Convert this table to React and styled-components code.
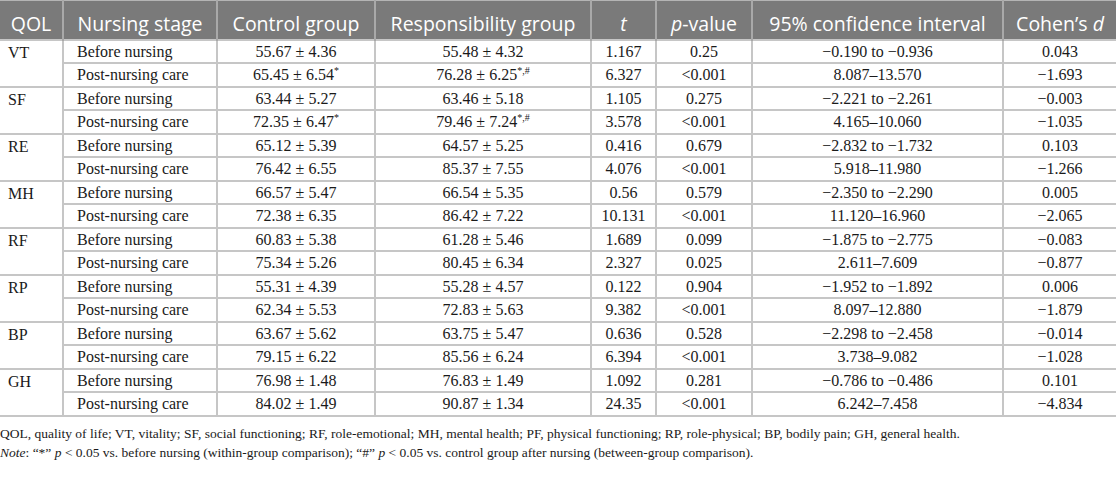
import React from 'react';
import styled, { createGlobalStyle } from 'styled-components';

const Global = createGlobalStyle`
  body {
    margin: 0;
    background: #fff;
  }
`;

const Page = styled.div`
  width: 1116px;
  background: #fff;
`;

const Table = styled.table`
  width: 1116px;
  table-layout: fixed;
  border-collapse: collapse;
  font-family: "Liberation Serif", "Times New Roman", serif;
  font-size: 16px;
  color: #1a1a1a;
`;

const HeadCell = styled.th`
  height: 39px;
  box-sizing: border-box;
  padding: 8px 0 0 0;
  background: #7a7a7a;
  color: #fff;
  font-family: "Open Sans", "Liberation Sans", sans-serif;
  font-weight: 400;
  font-size: 19.5px;
  text-align: center;
  white-space: nowrap;
  border-left: 2px solid #a9a9a9;
  border-top: 1px solid #b4b4b4;
  &:first-child { border-left: none; }
`;

const Row = styled.tr`
  height: 23.5px;
`;

const Cell = styled.td`
  padding: 0 ${p => (p.$left ? '13px' : '0')};
  text-align: ${p => (p.$left ? 'left' : 'center')};
  vertical-align: ${p => (p.$top ? 'top' : 'middle')};
  padding-top: ${p => (p.$top ? '2px' : '0')};
  border: 2px solid #c6c6c6;
  white-space: nowrap;
  line-height: 19px;
  &:first-child { border-left: none; }
  &:last-child { border-right: none; }
`;

const QolCell = styled(Cell)`
  padding-left: 8px;
`;

const Sup = styled.sup`
  font-size: 10px;
  line-height: 0;
  vertical-align: 6px;
`;

const Caption = styled.div`
  font-family: "Liberation Serif", "Times New Roman", serif;
  font-size: 13.5px;
  line-height: 19px;
  color: #1a1a1a;
  padding-top: 7px;
`;

const Line = styled.p`
  margin: 0;
  white-space: nowrap;
`;

const cols = [63, 154, 158, 216, 65, 96, 251, 113];

const data = [
  ['VT', [
    ['55.67 ± 4.36', '55.48 ± 4.32', '1.167', '0.25', '−0.190 to −0.936', '0.043'],
    ['65.45 ± 6.54', '76.28 ± 6.25', '6.327', '<0.001', '8.087–13.570', '−1.693', '*', '*,#'],
  ]],
  ['SF', [
    ['63.44 ± 5.27', '63.46 ± 5.18', '1.105', '0.275', '−2.221 to −2.261', '−0.003'],
    ['72.35 ± 6.47', '79.46 ± 7.24', '3.578', '<0.001', '4.165–10.060', '−1.035', '*', '*,#'],
  ]],
  ['RE', [
    ['65.12 ± 5.39', '64.57 ± 5.25', '0.416', '0.679', '−2.832 to −1.732', '0.103'],
    ['76.42 ± 6.55', '85.37 ± 7.55', '4.076', '<0.001', '5.918–11.980', '−1.266'],
  ]],
  ['MH', [
    ['66.57 ± 5.47', '66.54 ± 5.35', '0.56', '0.579', '−2.350 to −2.290', '0.005'],
    ['72.38 ± 6.35', '86.42 ± 7.22', '10.131', '<0.001', '11.120–16.960', '−2.065'],
  ]],
  ['RF', [
    ['60.83 ± 5.38', '61.28 ± 5.46', '1.689', '0.099', '−1.875 to −2.775', '−0.083'],
    ['75.34 ± 5.26', '80.45 ± 6.34', '2.327', '0.025', '2.611–7.609', '−0.877'],
  ]],
  ['RP', [
    ['55.31 ± 4.39', '55.28 ± 4.57', '0.122', '0.904', '−1.952 to −1.892', '0.006'],
    ['62.34 ± 5.53', '72.83 ± 5.63', '9.382', '<0.001', '8.097–12.880', '−1.879'],
  ]],
  ['BP', [
    ['63.67 ± 5.62', '63.75 ± 5.47', '0.636', '0.528', '−2.298 to −2.458', '−0.014'],
    ['79.15 ± 6.22', '85.56 ± 6.24', '6.394', '<0.001', '3.738–9.082', '−1.028'],
  ]],
  ['GH', [
    ['76.98 ± 1.48', '76.83 ± 1.49', '1.092', '0.281', '−0.786 to −0.486', '0.101'],
    ['84.02 ± 1.49', '90.87 ± 1.34', '24.35', '<0.001', '6.242–7.458', '−4.834'],
  ]],
];

const stages = ['Before nursing', 'Post-nursing care'];

export default function App() {
  return (
    <Page>
      <Global />
      <Table>
        <colgroup>
          {cols.map((w, i) => <col key={i} style={{ width: w }} />)}
        </colgroup>
        <thead>
          <tr>
            <HeadCell>QOL</HeadCell>
            <HeadCell>Nursing stage</HeadCell>
            <HeadCell>Control group</HeadCell>
            <HeadCell>Responsibility group</HeadCell>
            <HeadCell><i>t</i></HeadCell>
            <HeadCell><i>p</i>-value</HeadCell>
            <HeadCell>95% confidence interval</HeadCell>
            <HeadCell>Cohen’s <i>d</i></HeadCell>
          </tr>
        </thead>
        <tbody>
          {data.map(([qol, rows]) =>
            rows.map((r, i) => (
              <Row key={qol + i}>
                {i === 0 ? <QolCell rowSpan={2} $left $top>{qol}</QolCell> : null}
                <Cell $left>{stages[i]}</Cell>
                <Cell>{r[0]}{r[6] ? <Sup>{r[6]}</Sup> : null}</Cell>
                <Cell>{r[1]}{r[7] ? <Sup>{r[7]}</Sup> : null}</Cell>
                <Cell>{r[2]}</Cell>
                <Cell>{r[3]}</Cell>
                <Cell>{r[4]}</Cell>
                <Cell>{r[5]}</Cell>
              </Row>
            ))
          )}
        </tbody>
      </Table>
      <Caption>
        <Line>QOL, quality of life; VT, vitality; SF, social functioning; RF, role-emotional; MH, mental health; PF, physical functioning; RP, role-physical; BP, bodily pain; GH, general health.</Line>
        <Line><i>Note</i>: “*” <i>p</i> &lt; 0.05 vs. before nursing (within-group comparison); “#” <i>p</i> &lt; 0.05 vs. control group after nursing (between-group comparison).</Line>
      </Caption>
    </Page>
  );
}
